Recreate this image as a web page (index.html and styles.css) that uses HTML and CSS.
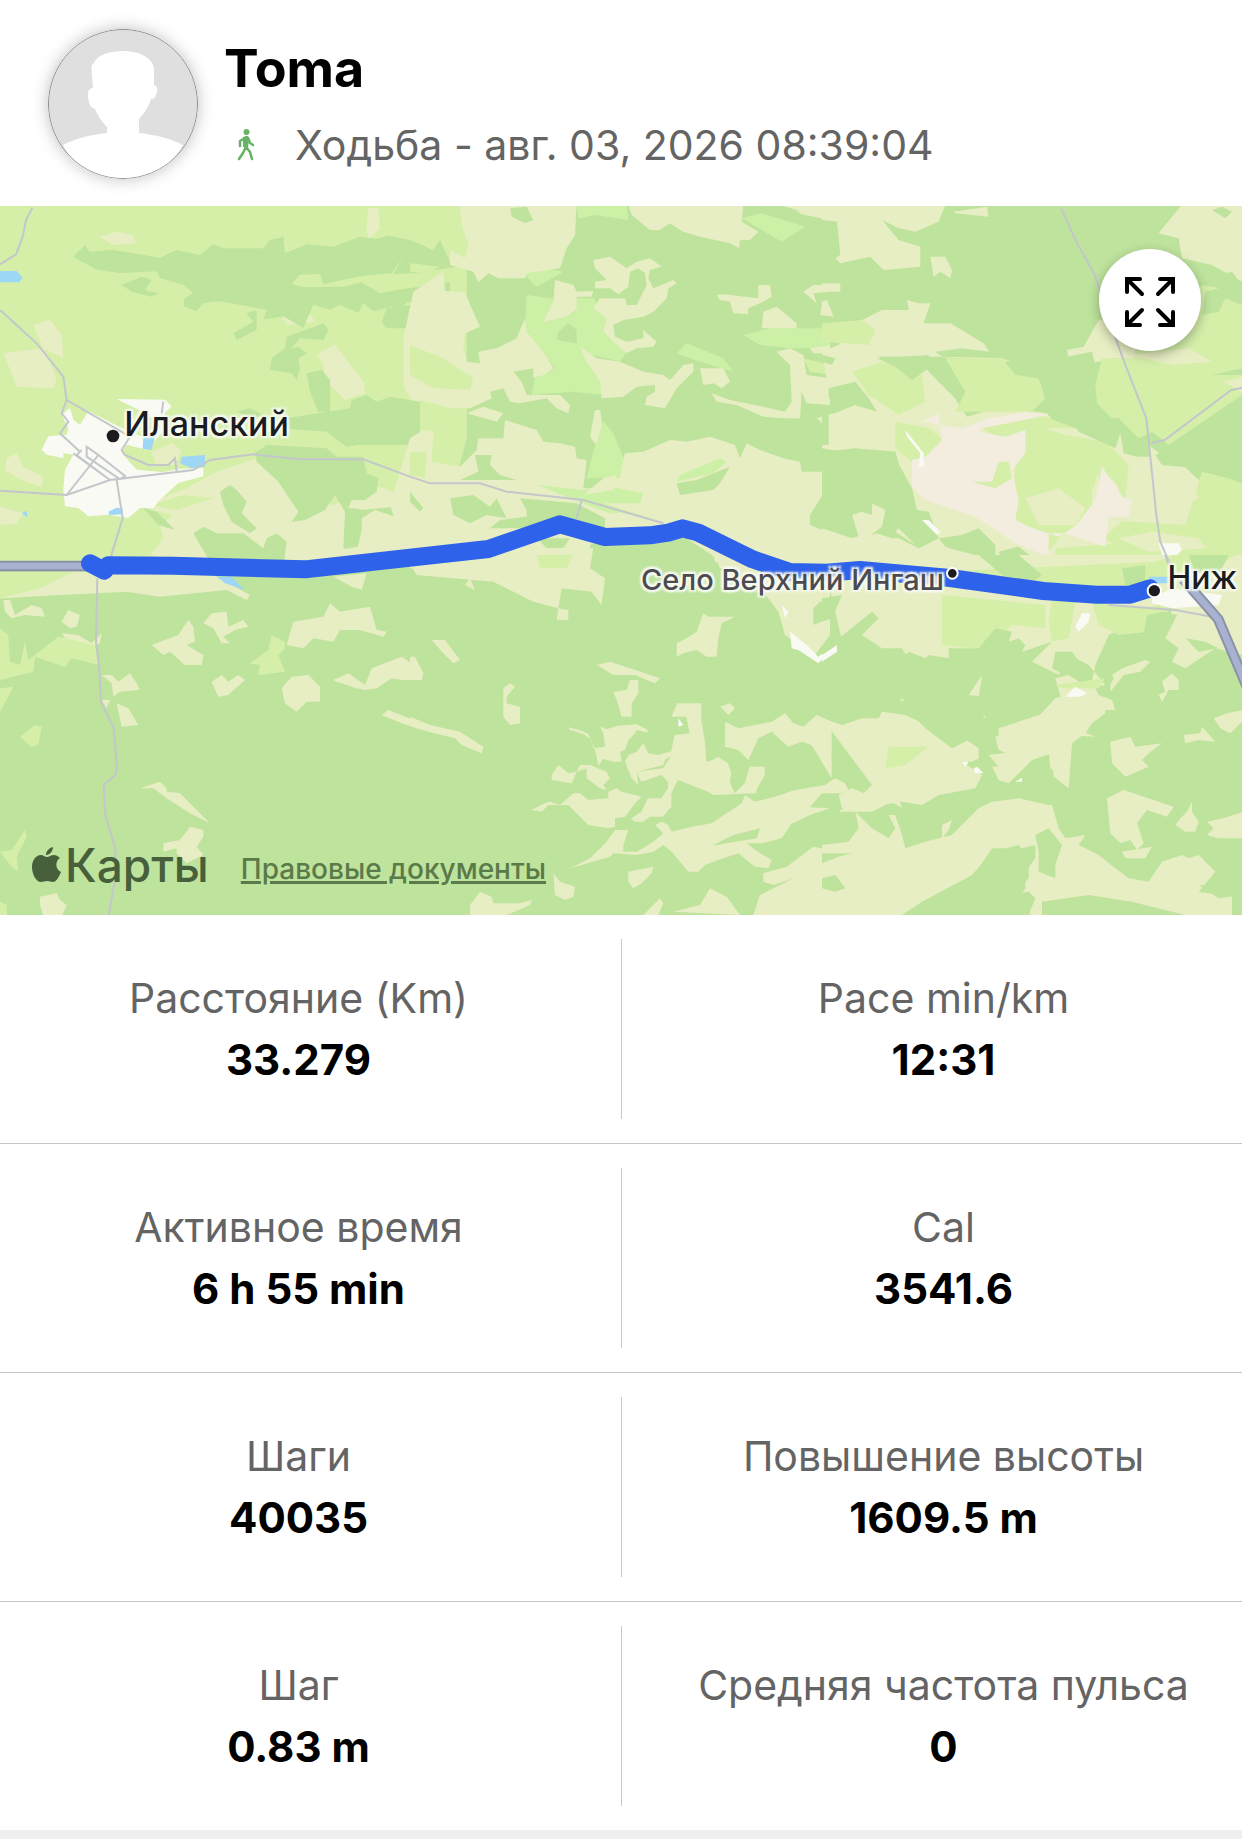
FILE: index.html
```html
<!DOCTYPE html>
<html lang="ru">

<head>
    <meta charset="UTF-8">
    <meta name="viewport" content="width=device-width, initial-scale=1.0">
    <title>Toma - Ходьба</title>
    <link rel="stylesheet" href="styles.css">
</head>

<body>
    <!-- Header Section -->
    <header class="header">
        <svg class="avatar" viewBox="0 0 150 150" aria-hidden="true">
            <circle cx="75" cy="75" r="75" fill="#dfdfdf"/>
            <path fill="#fff" d="M44 47c0-7-2-11 2-13 2-7 14-12 29-12s29 6 31 17v17c4 1 4 5 2 10-1 3-2 4-5 4-2 8-7 14-12 20v14c18 2 32 6 44 12-12 22-33 34-60 34s-50-14-60-34c11-6 26-10 44-12V98c-6-6-10-13-12-18-5-1-7-8-7-14 0-5 2-7 5-7z"/>
            <circle cx="75" cy="75" r="74.6" fill="none" stroke="#777" stroke-width=".8"/>
        </svg>
        <div class="user-info">
            <h1>Toma</h1>
            <p class="activity">
                <svg class="walk-icon" viewBox="0 0 18 32" aria-hidden="true">
                    <circle cx="9.500" cy="3" r="3" fill="#68b265"/>
                    <path d="M9 8v10l4 5 2 7M9 18l-3 6-4 6M8 9L3 12v5M11 9l2 5 3 2" fill="none" stroke="#68b265" stroke-width="2.600" stroke-linecap="round" stroke-linejoin="round"/>
                    <path d="M6 8l5-1 1 3-1 9-5-1z" fill="#68b265"/>
                </svg>
                <span>Ходьба - авг. 03, 2026 08:39:04</span>
            </p>
        </div>
    </header>

    <!-- Map Section -->
    <section class="map">
        <svg class="map-canvas" viewBox="0 0 3726 2127" aria-hidden="true">
            <rect width="3726" height="2127" fill="#bee39d"/>

            <!-- north west -->
            <g transform="translate(0 -3)">
                <path class="meadow" d="M0 0H1400V700L1300 1080H0z"/>
                <path class="field" d="M300 95l50-15 50 10 8 25-70 5zM1105 10h30l5 60-35 35-5-40zM850 320l20-30 40 5 35 55-80 10-15-15zM100 360l50-15 35 45 5 70-60-30zM10 445l120-15 40 90-10 30-110-5-15-40zM950 450l60-35 90 10-10 70 5 70-60 20-60-60-5-50zM1230 520l30-20v100l-30-20zM20 760l30-15 20 40 60 30-5 30-60-20-50-30zM0 905l70 20-20 30-50 5zM455 740l60-25 30 20-20 45-60-5z"/>
                <path class="field" d="M420 905l140-55 90-50 120-40 100 80 130 60 120-60 60 20 150-20V1080H560l-110-30 40-50-10-40 40-30z"/>
                <path class="meadow" d="M450 900l100-30 90 10-110 35zM700 700l80 15 80-15 120 10 70 20-170-5-110-5-60 20zM990 400l230-50v180l-130 0zM780 400l80 10-30 120 80 10-30 90-120 20z"/>
                <path class="forest" d="M220 155l35-35 15 20 70-5 140 23 50-23 70 15 40-32 30 12h120l20-25 40-10 5 50 65-27 80 7 80-30 50 7 35-10 65 13 90-10 60 40-10 50-125 20-65 2 30-50-35 48-85 7-120 25-10-30-60 2-25 28 35 10 120-2 55-13 55 33 50-10 160-23v45l-130 15-45 57 5-45-60 15-30-25-15 30-55-25-30 15-50-15-30 70-60-35-60 10 10-30-140-25-50 5-20 25-40-15 5-25 25-15-30-25-70-20-10-20-110 5-70-10z"/>
                <path class="forest" d="M365 240l60-25 30 10-20 30 40 10-20 10-60-15zM700 385l60-35-20-25 30-10v60l-60 30zM860 395l110-40 15 20-15 30-70-5-25 30 20-5 25 20-25 15 5 30-10 35-15-20-65-10 5-35 40-30zM920 505l45-10 25 30 0 95-35 0-25-60zM860 640l190-30 5-25 45-15 30 20 40-15 90 15v130l-120 0-60 0-40 5-60-45-140-10zM770 740l30-20 180 10 30 25 80 0 10 50 35 15-5 40-35 25-40 0-10 25 20 0 20 5 100-10 30-25 45-10v50l-75 15-60-20-40 25v35l-15 65-40-10 5-110-30-50-30 45-60 30-40 5 20-30-60-90-65-60-5-40zM660 860l30-20 20 15 30 35-15 35 45 45-20 15-55-35-25-50zM430 910l40 10 55 55-50-15zM580 985l30-20 40 20 80 0 60 45 10-30 30-15 30 25-10 80H700l-70-20zM710 620l40-10 40 20-30 10zM1160 310l70-10 30 30v40l-100 0-15-20z"/>
                <path class="town" d="M350 582l145 2 20 20-20 20-10 60-45 50-60-15-15 25 45 50 80 8 45-10 75-3 0 25-75 20-55 50-20 25-40 0-35 30-60-10-60 5-30-25-40-5-5-50 5-60 25-45-30-5 0 15-50-10-15-15 20-40 55-5 5-20-20-40 25-20 10 35 20 15 25-40 60 30 60 30 40 15 60-30-50-40z"/>
                <path class="water" d="M0 198h50l18 20-10 14H0zM430 695l36-3-12 43-26-4zM545 755l70-5v35l-40 5-35-15zM325 920l25-12 18 2v18l-40 2zM65 925l15-8 2 20zM440 635h10v60l-10-10z"/>
            </g>

            <!-- north centre -->
            <g transform="translate(1230 -3)">
                <path class="meadow" d="M0 0H150L180 150l-60 20-30-65-20 30L0 105zM0 175l90 10-40 20-50-5z"/>
                <path class="grass" d="M350 270l70 10 130 0 40 60 0 50 60 50-20 30-80-20 30 80-5 40-90-10-120 10 10-50 60-30-50-60-40-60zM340 205l60-15 60 10-80 45zM500 0h150l5 45-100-15-50 10zM1000 390l80-20 180 0v50l-60 10-60 0-90-10zM800 445l30-30 110 45 30 40-100-30z"/>
                <path class="field" d="M150 0H500L495 90 470 130 450 190 350 205 345 220 265 220 235 205 205 232 190 200 120 180 120 135 165 160 175 120 155 60zM10 260L100 200 105 258 165 262 185 310 210 365 165 385 160 430 170 470 210 475 205 440 260 430 320 400 345 340 350 380 400 440 430 490 400 510 370 520 370 490 310 500 335 530 350 570 450 570 480 600 475 625 440 610 410 580 330 595 300 590 280 550 240 560 245 580 180 610 120 610 70 595 0 580-20 540-20 400z"/>
                <path class="field" d="M435 225L490 240 500 260 550 258 545 275 500 275 500 310 470 335 400 350 430 290zM550 165L600 155 650 190 680 170 720 160 755 185 720 195 715 220 730 250 790 225 800 235 775 250 770 280 730 320 700 335 640 345 610 360 615 395 650 410 700 400 700 375 740 410 730 425 680 430 650 445 610 410 580 380 590 340 550 310 570 280 645 280 650 300 680 300 710 240 705 205 685 190 660 200 655 245 625 268 600 250 555 250 555 230 590 225 555 190zM510 425L560 460 630 470 700 500 760 510 780 525 820 480 850 475 850 500 800 550 765 610 705 600 710 575 735 560 735 540 680 545 640 575 575 580 570 530 530 470zM870 490L940 490 960 530 935 550 910 535 880 540z"/>
                <path class="field" d="M920 270L940 268 1045 280 1045 240 1080 240 1085 275 1050 295 1015 310 1015 328 970 325 960 290 930 285zM1100 305l60 50v15h-105l5-50zM1180 260l30-20h50v20l-50 5 10 30zM905 565L960 585 1060 605 1125 620 1145 590 1140 480 1100 440 1140 430 1180 450 1190 510 1260 520V600L1190 595 1175 560 1170 640 1125 640 1060 635 980 600 920 590zM1220 640l50-15v60zM1200 430l60-10v25h-50zM655 0H1000L995 50 1045 80 1020 105 990 105 988 130 960 115 870 95 820 80 780 55 750 75 720 75 690 50 665 30zM1110 0H1260V45L1180 35 1160 15z"/>
                <path class="field" d="M0 700L40 675 70 680 65 770 150 785 200 735 205 700 280 700 285 645 380 675 400 710 450 715 495 725 500 760 530 765 520 850 560 850 620 820 645 745 700 740 780 705 830 710 900 695 975 720 990 760 1010 715 1050 735 1120 760 1170 770 1175 800 1255 800 1250 850 1200 930 1200 960 1260 985V1090H0L-60 900zM170 625l50-20 60 20-20 25zM555 615l15 0 10 60-10 60-30-40z"/>
                <path class="meadow" d="M0 420l100 40 90 60-10 35-110-5-70-40zM0 740l50 0-5 80-45-10zM1180 460l80 20v30l-60-10z"/>
                <path class="grass" d="M995 40l60-15 130 40-70 45zM580 650l30 35 30 75-10 60-100 0 20-80zM380 840l140 15 80-10 100 20-10 30-110 0 160 50-80 0-90-30zM800 830l10-20 120-50 20 10-40 35z"/>
                <path class="forest" d="M300 10l50-5 20 40-25 10-40-20zM1000 5l110 10 150 30-90-5-70-15-90-5zM445 380l30-25 25 20 0 40-60-10zM195 750l50 0-5 30 30 30 50 15-170 0 55-25zM120 880l70-10 50 35 20-25 30 60-60-10-50 25-50-25zM240 970l30-25 80-10 0-20-20-35 170 15 85 45 0 30H300zM800 835l60-10 100-40-30 50-20 20-100 15zM380 1000l100 0-20 30-50 0zM540 1020l120-50 140 10 120 80 20 60H540zM0 860l40 50-10 10-30-30z"/>
                <path class="field" d="M585 930l60-10 90 30-50 20-80-5zM520 870l60-50 40-10-10 45z"/>
            </g>

            <!-- north east -->
            <g transform="translate(2466 -3)">
                <path class="field" d="M0 0H370l-20 50-70 30-50-10-50-25 50 60 65 20 0 60-110 10-40-40-90 20-15-15 15-10-10-100L0 45zM395 20l100-15 5 30-100-10zM325 155l45 0 20 40-5 25-30-20-20 15zM1080 0h180v230l-90-50-90-20-10-60-60-15 40-50zM0 235h55v25H0zM0 440l50-20 40-60 90-45 80 0-5-30 35 10 35 0-20 60 80 0 100 60 20 30 60 25-220-15-180 0 150 40 80 80 40 60 100-30 140 20 60 80 60 20 40-80 60 40 10 60 40 10h110l130 120v200H500L0 1060V960l150 30 140-50-20-90-60-110-100 10-110-20L0 640l100-40-80-40z"/>
                <path class="field" d="M830 345l90 10 250 115-300-10-40 10-60 10-30-20-5-25 50-10z"/>
                <path class="meadow" d="M0 355l120-10 40 30-20 45-140-10zM90 500l90-30 120 40 10 80-80 40-90-60zM370 460l170 0 40 50 70 10 20 60-40 40-230 0 30-60zM820 540l20-80 370 10 50-200h-80l-130-60v260l100 40h110v60l-220 150-50-40-40 20-60-60-60 0zM470 660l160-40 210 80 80 80-10 110-80-40 0-50-20 60 0 60-90 70-50 60-50-30-50-90 10-150-30-60zM220 650l100 20 100 80-40 50-90-10-70-60zM1140 800l120 30v220h-220l-90 0-110-50 60-50 40 0 150 10zM700 1030l250-20 100 60H700z"/>
                <path class="meadow" d="M940 420l200-180 120 20v230l-90 20-30 40-110 110-120 0z"/>
                <path class="field" d="M980 720l40 30 80 50 30 80-60 30-80-20zM610 880l100-30 80 60-30 50-110 0zM890 1000l100-20 140 20 20 30-170 10zM670 670l100 0 80 40-120-20zM920 450l180-20 70 40-120 10zM1205 530l60-15v50z"/>
                <path class="quarry" d="M300 650l120 20 80-30 110-20 70 10-200 40-10 10 80 15 60-20 0 70-40 50 20 90-10 60 40 20 90 30 50-30 60-80 20-100 20 30 20 20 20 40 30 10-10 50-60 0-10 90-60-20-60-20-50 0 0 70-100-40-120-80-150-50-40-40 0-80 40-10 50-50-10-80z"/>
                <path class="meadow" d="M450 830l60 0 20-60 30 0 10 50-50 30z"/>
                <path class="forest" d="M820 480l-30 60 40 60 70 70-20 60-110-50-30-50-70-30-10-100-60-20 60-10 150-30zM165 460l155-10 0 40-50 35-50-40zM340 440l80-10 160 20-20 10-200-5zM20 550l80-20 40 50 25 40-100-30-45-10zM1000 750l50-25 50 25 80 15 80 10v60l-80-30-60-15-100-10zM0 740l100-10 120 10 20 70 20 100 60 10 30 80-60 30-60-30-20 0-60-20-60 20-90-30zM0 600l20 20v100H0zM350 1000l70-10 50-20 50 50 0 30-60 0-60-15-30-10zM530 1040l60-15 80 60h-120zM0 450l40 10-10 20-30-10zM1170 15l30-10 30 15-20 20zM1190 210l40-10 30 40v60l-50-20-20 40-50 10 10-70 40-10z"/>
                <path class="field" d="M90 930l30-10 30 10 0-35 40 20-10 50-40 30-30 0zM220 980l10-10 50 50zM0 290l15-5 20 50-40-5z"/>
                <path class="town" d="M300 945l20 0 35 35-10 10zM1010 1015l60 0 10 20-30 30-30-15zM250 675l40 50 15 20 0 40-15 0 5-40-40-50z"/>
            </g>

            <!-- south west -->
            <g transform="translate(0 1047)">
                <path class="meadow" d="M0 50h290l0 60-290 20z"/>
                <path class="field" d="M0 130l120-30 100-50 420 10 110 60-10 15-60-30-200 20-100-15-200 10-170 10zM10 135l20 0 15 45 50-30 30 10 10 25-60-5-40 10-20-20zM185 200l20-35 35 15-10 35-20 5zM185 235l50 5 40 25 30-30-5 30-20 10-50 0-20-5zM455 270l80-30 30-45 15 20 5 45-25 10 50 30-5 30-50 0-45-40-20 10zM610 205l25-30 45-5 5 45 45-20 15 20-40 10-35 20 20 20-25 0-25-45zM860 270l20-70 90-15 20-40 30 25 90-15 20 70 30 5-10 15-70-20-60 0-20 35-60-10-30 30zM305 360l30 0 20 20 35-25 20 30 10 20-60 5-20 15-5-40zM635 380l30-20 20 20 30-20 20 15-50 45-30 5zM845 400l30-35 50-5 35 35 0 45-40 0-30 30-35-25zM1000 375l45-20 50 35 20-50 90-35 60 40v30l-60 0-30-5-45 30-35 5-25-5-60-20zM350 445l35 15 30 50-50 5zM305 435l25 0-10 25zM1145 480l20-15 100 40v20l-60-20zM420 700l60-20 20 20 0 10 40 5 80 80 10 10-60-30-70-45-40-30zM490 865l50-10 30-40 40 10 0 20-20 30 20 25-20 10-30 15-30-30 0-15-40 10zM120 1025l50-10 10 20 20 15-15 35-55-5-10-30zM1000 65l100-10-15 50-30-10zM840 0h100l320-60v60z"/>
                <path class="meadow" d="M0 220l25 20 5 80 30 10 15-70 10 55 90-70 110 25 10 60-80-20-20 25-90-30-5 45-100 25zM0 400l40-5-40 75zM60 545l45-35 20 5-10 55-20 5zM750 325l55-40 10-45 40 20 0 20-20 20 20 50-80 10 5-30zM0 890l35-5 40-60 5 20-30 60 5 45-20-15zM0 1040l20 10v30H0z"/>
                <path class="water" d="M650 65h45l40 40-60-20z"/>
            </g>

            <!-- south centre -->
            <g transform="translate(1230 1047)">
                <path class="field" d="M20 60L0 30 350-20h200l-10 60 45 30-10 80-30-40-90-10-10 60 30 5 0 30-35 0 5-35-75-20-120-60zM165 90l15-20 15 35zM65 255l40 0 45 60-20 10-30-30zM0 305l15 0 25 50-5 20-35-5zM800 265l30-15 30-20 20-55 15 10 80 0-40 20-10 45-5 55-30 0-30-20-40 10-20 10zM560 330l40-10 60 20 90 30-15 15-60-25-65 0zM610 410l40-5 10-30 25 0 0 40-20 30 0 40-30 0-15-50zM280 400l20-15 15 10-25 30 0 20 40 10 0 50-30 5-20-25zM0 485l60 25 90 20 70 45-5 20-60-25-20-20-80-20-55-20zM930 455l30-10 15 15-20 20z"/>
                <path class="field" d="M480 525l40 12 25 18 5 25 35-5-5-40-10-20 20 8 30-10 60-5 30 15 5 10-35-8-5 10-20 20-10 30-15 5 5 30-25 0-30-8-15 20-10-50-20-45-20-10-40-10zM425 660l20-30 30 25 25-5 10-20 30 0 50 20 10 20-20 20 10 15-20-5-40-30 0-30-30 10-15 35-60-10zM655 600l25-10 20-25 15 30 30 5 50-15 5 5-35 25-5 15-80 20 5 40-20-20-20-50zM405 745l15-5 30 10 40-35 20 0 25 20 60-5 0-20 25-10 15 10 60 15-20 20-30 40-30 5 0 25-20 5-60-10-30-30-30-30-60 0-20 20-30-5z"/>
                <path class="field" d="M802 445h72v50l10 60 5 65 20-5 15-10 30 20 10 30-5 25 15 35 30-30 15-50h45v25l-25 45 0 10-130 5-15-10-90-35-20 40 0 30 0 10-25 30-40 0-20 15-25 0-10-10 30-20 20-40 40 0 20-30 0-20-20-20-60 20-15-30 80-10 20-30 15-70 45-5-10-50-45 0zM480 940l60-30 50-50 25-35 40 0-15 45 0 20 40 0 50-30 30-25-25-25 20-10 20 10 10 20 60-15 60-10 90-60 10-25 30 20 60-15 60-20 90-15 30-20 30 15 10 20-20 10-60 0-50 60-30 15-40 60-60 15-45 0 25 20 50 30-10 25-40-5-50-40-60 20-40 15-20 20-30 0-50-60-25-20-30 20-50 10-70-5-10 10zM945 500l40 20 100-20 40-25 25 30 30 10 40-35 45 20v170l-60-100-30-10-40 15-50-45-40 20-30 65-30-30-40-10z"/>
                <path class="field" d="M430 955l20 25 45 15-5 30-25 10-30-15zM180 1050l30-40 35 15 5 20 80 0 35-10-5 15-70 30h-110zM655 950l75-15-5 20-30 30-25 15-15-20zM700 1080l50-50 10 15-15 35zM790 1070l80-20 30-50 50 25 40 55zM1060 955l70-20 80-60 50 10v195h-230l20-60 100-50-60 20-30-10zM1120 800l50-45 90 5-60 20-50 25z"/>
                <path class="field" d="M910 0h200l60 60 90 0v180l-45 60-90-60-20-70-60-80-80-50-50-20z"/>
                <path class="forest" d="M1210 160l20-20h30v50l-50 20zM910 870l60-30 80-20-10 30-120 20z"/>
                <path class="town" d="M1115 150l20 20-10 20zM1140 230l50 40 35 35 35-30v15l-35 35-60-40-20-5zM805 490l15 20-15 5z"/>
                <path class="meadow" d="M380 0h110l-20 40-80 0z"/>
            </g>

            <!-- south east -->
            <g transform="translate(2466 1047)">
                <path class="field" d="M0 0h1260v300l-80-20-90 60-40-20 20-40-40-30 20-90-90 0-60 60-40 20-40 90-10 50 20 40 40 15 10 30-40 0-40 30-40 0 0 25 60 25-80-5-10 140-45-40-5-60-50 20-80 60-50-60 80-10 10-20-60-20 0-30 150-50 20-30 20 0-20-70 40-10 60 40 50-10-50-60-60-30-30 60-60-30-20-10 60-60-90 30-60 0-60 20 0 50-10 70 20 60-60-20-60 20 0-30 70-60-50-60-130-50-20 20-30 30-90 90-20 0zM0 490l60 20 60-20 50 0 10-20 70 10 130 60 10-25 20 25 60 40 0 30-20 10-30 0 60 40-20 40-110 20-50 30-60-10-60 10-30 20-100 0 80-60 20-20zM50 720l40-20 50 20 40-20 40 0 20 60-30-20-60 30-30-20-60 10zM0 870l80-10 30-40-10-50 50 50 50 30 20-30-20-40 20 0 20 60 10 40 60-20 80-20 80-80 40-20 80-10 90 20 10 0 20 70 20 30 60-10-20 30 60 30 50 40 40 30 60 10 40-60 60-20 20 10 30-10 50 50-50 60 60 10 40-20v110H640l-20-30 20-50-20-20-50 10 50-50 0-60-30-40-80 20-60 70-150 80-30 30-60 20H0zM855 730l50-25 60 20 90 30-20 30-60-20-30 40 20 60-20 20-20-30-30 10-30-30zM900 890l90-15-20 35-60 0zM865 560l60-15 15 30 80-10-40 30-20 20 20 20-70 30-20-20-20-20zM1075 790l20-20 15-30 0 30 20 30-10 30-30 0-30-20zM1155 800l50-10 60-20v80l-80 0-30-10 20-20zM1175 490l40-15 50-10v30l-40 40-30-15zM1085 540l50-5 5-20 40 45-50-5-40 10zM1020 380l30-25 20 20 0 30-30 0-20 35-10-20 20-10zM870 360l30-20 70-25 15 5-30 30-50 10-40 50 0-20 10-20zM360 850l0-40 30-15-10 30zM220 410l50-50 40 0 10 50 30 10 0 40-40-10-30-30-40 20z"/>
                <path class="field" d="M520 545l110-40 70-75 50-15 60 0 40 30 0 30-40 30-20 30-40 30-10 135-45-35-5-70-60 20-70 70-30-10-20-40 60 0 10-30-50-20z"/>
                <path class="meadow" d="M360 120l310 30 0 70-100-10-60 60-60 10-90-10zM690 130l280 30 80-20-40 90-30 0-90 10-60-30-20-70-30 0-20 0-20 110-50 10-10-60zM360 50l640-30 60-20h180l-60 40-250 70zM200 575l120 0-70 55-60 10zM700 390l150-20-20 30-110 0z"/>
                <path class="forest" d="M150 170l20 20-50 50 60 40 60 0 30 50 20-10-60 60 70-60 20-20 60 10v-30h90l50-60 50 10-10 30 30-10 20 20-30 60-30 0-50 60-20-30-40 60 100 10-60 60-50 70-40 20-80-60-40-40 0-40-40-10-40 20-40-10-60 60L0 480V290zM0 130l60-10-30 70-30 10zM470 0h120l70 60-40 30-80-30zM900 40l70-10 0 70-60-10zM1100 0h120l-30 60-70-10zM975 180l50-10 40 10-30 60-40 60-110-10 20-50 60 0z"/>
                <path class="forest" d="M700 290l50 0 30 40 30 30-80 0-40-20zM1090 250l60 10 40 20-60 10zM660 1040l140-20 130 20 160 40H660zM240 1080l60-40 60-10 90-60 60-90 90 0 40-10 0 40-30 40 0 50-30 50 30 0 30 60zM640 840l40-20 40 50-20 60 0 40-50-20 0-60zM1130 990l60 0 40-30 30 60-70 10zM0 970l40-10 30 40-30 10-40-10zM0 895l90 0-40 10-50 20z"/>
                <path class="town" d="M760 215l20-40 25 0-5 25-30 30zM730 425l30-30 35 20-20 10zM0 300l45-30 0 20-45 30zM990 130l60-30 150 20-10 30-140 10-60-15zM455 640l10-5 20 20-25 0zM420 620h20l-10 15zM580 680l20-12v12z"/>
                <path class="water" d="M980 65h60v20h-50z"/>
            </g>

            <!-- roads -->
            <g class="road">
                <path transform="translate(0 -3)" d="M97 8L78 45 68 95 48 148 0 178M0 315l110 100 80 100 10 70-15 40 20 25-25 35 60 55M200 585l190 110-25 40 10 15 70 30 60 0 20-20 5 40M0 857l200 13 130-45 250-30 50-30 130-17 140 15 190 0 140 52M350 825l18 115-40 130M200 870l95-120-35-25v30l100 68 15-10-80-63M220 745l110 80-100-75 15-15M490 590l-5 35"/>
                <path transform="translate(1230 -3)" d="M0 815l60 20 150 0 80 25 230 25 240 70M515 885l-15 55"/>
                <path transform="translate(2466 -3)" d="M718 10l40 90 60 110 70 210 30 80 55 140 30 290 12 80 30 70M988 715l40-10 200-150 32-6"/>
                <path transform="translate(0 1047)" d="M292 70l-4 190 10 80 5 100 38 80 10 120-5 20-35 30 5 90 30 100 0 90-20 110"/>
                <path transform="translate(2466 1047)" d="M860 150l200 15 110 20M1030 0l10 30"/>
            </g>

            <!-- highway and track -->
            <path class="highway-edge" d="M0 1080H280M3550 1120L3655 1240 3740 1440"/>
            <path class="highway" d="M0 1080H280M3550 1120L3655 1240 3740 1440"/>
            <path class="track" d="M270 1072L313 1094 325 1078 520 1079 915 1090 1465 1029 1680 955 1815 993 1950 988 2005 980 2048 967 2095 980 2258 1060 2370 1098 2480 1100 2580 1092 2850 1116 3130 1155 3290 1166 3390 1166 3450 1147"/>

            <!-- town dots -->
            <circle class="dot" cx="339" cy="690" r="19"/>
            <circle class="dot dot-ring" cx="2857" cy="1102" r="16"/>
            <circle class="dot dot-ring" cx="3463" cy="1154" r="20"/>
        </svg>

        <span class="place place-ilansky">Иланский</span>
        <span class="place place-small place-ingash">Село Верхний Ингаш</span>
        <span class="place place-nizh">Ниж</span>

        <button class="expand" type="button" aria-label="Развернуть карту">
            <svg viewBox="0 0 50 50" aria-hidden="true">
                <path d="M17 17L3 3M2 15V2h13M33 17L47 3M35 2h13v13M17 33L3 47M2 35v13h13M33 33l14 14M35 48h13V35" fill="none" stroke="#000" stroke-width="4" stroke-linecap="round"/>
            </svg>
        </button>

        <div class="map-credits">
            <span class="brand">
                <svg viewBox="0 0 29 36" aria-hidden="true">
                    <path fill="#485f3c" d="M21 0c0 4-3 8-7 8 0-4 3-7 7-8zM15 10c2 0 4-2 7-2 2 0 4 1 6 3-5 3-5 11 1 14-2 5-5 10-8 10-2 0-3-1-6-1s-4 1-6 1C4 35 0 27 0 20 0 13 4 8 9 8c2 0 4 2 6 2z"/>
                </svg>
                <span>Карты</span>
            </span>
            <a href="#">Правовые документы</a>
        </div>
    </section>

    <!-- Workout Stats -->
    <dl class="stats">
        <div class="stat">
            <dt>Расстояние (Km)</dt>
            <dd>33.279</dd>
        </div>
        <div class="stat">
            <dt>Pace min/km</dt>
            <dd>12:31</dd>
        </div>
        <div class="stat">
            <dt>Активное время</dt>
            <dd>6 h 55 min</dd>
        </div>
        <div class="stat">
            <dt>Cal</dt>
            <dd>3541.6</dd>
        </div>
        <div class="stat">
            <dt>Шаги</dt>
            <dd>40035</dd>
        </div>
        <div class="stat">
            <dt>Повышение высоты</dt>
            <dd>1609.5 m</dd>
        </div>
        <div class="stat">
            <dt>Шаг</dt>
            <dd>0.83 m</dd>
        </div>
        <div class="stat">
            <dt>Средняя частота пульса</dt>
            <dd>0</dd>
        </div>
    </dl>
</body>

</html>
```
FILE: styles.css
```css
/* Base Styles */
body, html {
    margin: 0;
    padding: 0;
    font-family: Inter, "Liberation Sans", sans-serif;
    background-color: #efefef;
}

/* Header */
.header {
    display: flex;
    align-items: center;
    gap: 26px;
    padding: 28px 48px 26px;
    background-color: #fff;
}

.avatar {
    flex: none;
    width: 150px;
    height: 150px;
    border-radius: 50%;
    box-shadow: 0 0 16px rgba(0, 0, 0, 0.25);
}

.user-info h1 {
    margin: 0;
    font-size: 52px;
    line-height: 82px;
    font-weight: 700;
    color: #000;
}

.activity {
    display: flex;
    align-items: center;
    gap: 40px;
    margin: 0;
    padding-left: 13px;
    font-size: 41px;
    line-height: 70px;
    color: #646464;
}

.walk-icon {
    width: 18px;
    height: 32px;
}

/* Map */
.map {
    position: relative;
    overflow: hidden;
}

.map-canvas {
    display: block;
    width: 100%;
    height: auto;
}

.meadow {
    fill: #d5efa9;
}

.grass {
    fill: #cdf0a7;
}

.field {
    fill: #e8eec3;
}

.forest {
    fill: #bee39d;
}

.quarry {
    fill: #f2eddf;
}

.town {
    fill: #f9faf3;
}

.water {
    fill: #9ed7f5;
}

.road {
    fill: none;
    stroke: #c3c7cb;
    stroke-width: 6;
}

.highway-edge {
    fill: none;
    stroke: #8a92a8;
    stroke-width: 32;
}

.highway {
    fill: none;
    stroke: #a9b1d0;
    stroke-width: 20;
}

.track {
    fill: none;
    stroke: #2f62ea;
    stroke-width: 54;
    stroke-linecap: round;
    stroke-linejoin: round;
}

.dot {
    fill: #1c1c1e;
}

.dot-ring {
    stroke: #fff;
    stroke-width: 6;
}

.place {
    position: absolute;
    font-size: 34px;
    line-height: 38px;
    font-weight: 500;
    white-space: nowrap;
    color: #1c1c1e;
    text-shadow: 0 0 4px #fff, 2px 2px 2px #f4f8ec, -2px -2px 2px #f4f8ec, 2px -2px 2px #f4f8ec, -2px 2px 2px #f4f8ec;
}

.place-small {
    font-size: 29px;
    color: #4c4c50;
}

.place-ilansky {
    left: 10%;
    top: 28%;
}

.place-ingash {
    right: 24%;
    top: 50%;
}

.place-nizh {
    left: 94%;
    top: 50%;
    font-size: 32px;
    line-height: 34px;
}

.expand {
    position: absolute;
    top: 43px;
    right: 41px;
    display: flex;
    align-items: center;
    justify-content: center;
    width: 102px;
    height: 102px;
    padding: 4px 0 0;
    border: none;
    border-radius: 50%;
    background-color: #fff;
    box-shadow: 0 4px 12px rgba(0, 0, 0, 0.3);
    cursor: pointer;
}

.expand svg {
    width: 50px;
    height: 50px;
}

.map-credits {
    position: absolute;
    left: 32px;
    bottom: 22px;
    display: flex;
    align-items: center;
    gap: 32px;
    color: #485f3c;
}

.brand {
    display: flex;
    align-items: center;
    gap: 4px;
    font-size: 46px;
    line-height: 56px;
    font-weight: 500;
}

.brand svg {
    width: 29px;
    height: 36px;
}

.map-credits a {
    padding-top: 8px;
    font-size: 28px;
    font-weight: 500;
    color: #5b7a49;
    text-decoration-thickness: 3px;
}

/* Stats */
.stats {
    display: grid;
    grid-template-columns: 1fr 1fr;
    margin: 0;
    background-color: #fff;
}

.stat {
    position: relative;
    display: flex;
    flex-direction: column;
    justify-content: center;
    padding: 52px 24px 52px 0;
    border-bottom: 1px solid #c8c8c8;
    text-align: center;
}

.stat:nth-child(even) {
    padding: 52px 0 52px 24px;
}

.stat:nth-last-child(-n+2) {
    border-bottom: none;
}

/* Short rule between the two columns */
.stat:nth-child(even)::before {
    content: '';
    position: absolute;
    top: 24px;
    bottom: 24px;
    left: 0;
    width: 1px;
    background-color: #c8c8c8;
}

.stat dt {
    font-size: 41px;
    line-height: 62px;
    color: #646464;
}

.stat dd {
    margin: 0;
    font-size: 42px;
    line-height: 62px;
    font-weight: 700;
    color: #000;
}
```
